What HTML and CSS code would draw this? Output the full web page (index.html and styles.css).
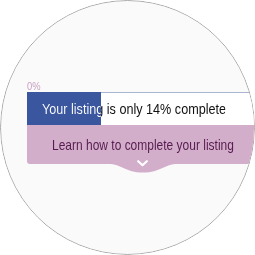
FILE: index.html
```html
<!DOCTYPE html>
<html>
<head>
<meta charset="utf-8">
<link rel="stylesheet" href="styles.css">
</head>
<body>
<div class="lens">
  <div class="card">
    <div class="pct"><span class="pct-text">0%</span></div>
    <div class="bar">
      <span class="bar-text">Your listing is only 14% complete</span>
    </div>
    <div class="learn">
      <span class="learn-text">Learn how to complete your listing</span>
      <svg class="tab" width="70" height="10" viewBox="0 0 70 10"><path d="M0 0 C14 0 17 8.5 35 8.5 C53 8.5 56 0 70 0 Z" fill="#d3aecb"/></svg>
      <svg class="chev" width="11" height="7" viewBox="0 0 11 7"><polyline points="1.2,1.2 5.5,5.2 9.8,1.2" fill="none" stroke="#ffffff" stroke-width="2.2" stroke-linecap="round" stroke-linejoin="round"/></svg>
    </div>
  </div>
</div>
</body>
</html>
```
FILE: styles.css
```css
html, body {
  margin: 0;
  padding: 0;
  background: #ffffff;
}
.lens {
  width: 253px;
  height: 253px;
  border: 1px solid #a9a9a9;
  border-radius: 50%;
  background: #fafafa;
  overflow: hidden;
  clip-path: circle(50%);
  font-family: "Liberation Sans", Arial, sans-serif;
}
.card {
  margin: 79px 0 0 26px;
  width: 250px;
}
.pct {
  height: 12px;
  line-height: 12px;
  font-size: 11px;
  color: #c8a2c2;
}
.pct-text {
  display: inline-block;
  transform: scaleX(0.85);
  transform-origin: left center;
}
.bar {
  height: 33px;
  line-height: 34px;
  padding-left: 15px;
  background:
    linear-gradient(#a9b5d0, #a9b5d0) 74px 0 / 100% 1px no-repeat,
    linear-gradient(90deg, #3a569f 0, #3a569f 74px, #ffffff 74px);
}
.bar-text {
  display: inline-block;
  font-size: 15.4px;
  white-space: nowrap;
  transform: scaleX(0.82);
  transform-origin: left center;
  color: transparent;
  background: linear-gradient(90deg, #ffffff 0, #ffffff 72px, #111111 72px);
  -webkit-background-clip: text;
  background-clip: text;
}
.learn {
  position: relative;
  height: 39px;
  line-height: 40px;
  padding-left: 25px;
  background: #d3aecb;
  border-radius: 0 0 3px 3px;
}
.learn-text {
  display: inline-block;
  font-size: 14.8px;
  white-space: nowrap;
  color: #571c4f;
  transform: scaleX(0.81);
  transform-origin: left center;
}
.tab {
  position: absolute;
  left: 81px;
  top: 100%;
  display: block;
}
.chev {
  position: absolute;
  left: 110px;
  top: 35px;
  display: block;
}
```
